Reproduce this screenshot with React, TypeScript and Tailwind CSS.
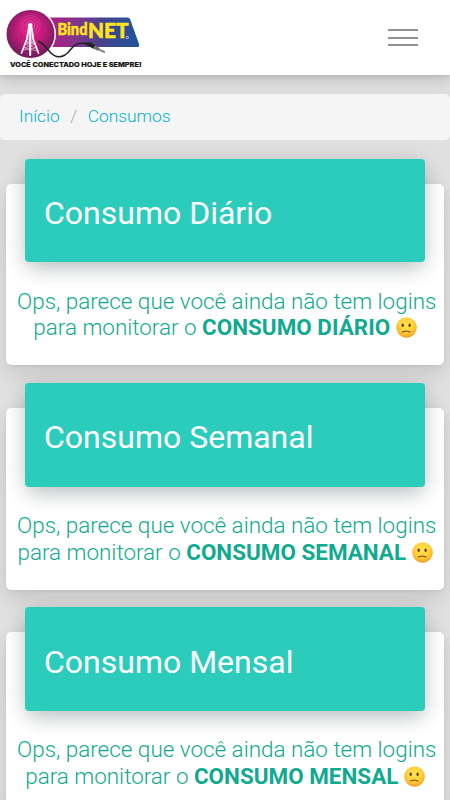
import { useState } from "react";

const consumos = [
  { title: "Consumo Diário", label: "CONSUMO DIÁRIO" },
  { title: "Consumo Semanal", label: "CONSUMO SEMANAL" },
  { title: "Consumo Mensal", label: "CONSUMO MENSAL" },
];

function Logo() {
  return (
    <svg width="144" height="72" viewBox="0 0 144 72" aria-label="BindNET">
      <defs>
        <linearGradient id="banner" x1="0" x2="1" y1="0" y2="0">
          <stop offset="0" stopColor="#b01c80" />
          <stop offset="0.3" stopColor="#84358a" />
          <stop offset="0.62" stopColor="#40458f" />
          <stop offset="1" stopColor="#20549b" />
        </linearGradient>
        <radialGradient id="disc" cx="0.5" cy="0.42" r="0.55">
          <stop offset="0" stopColor="#ec168b" />
          <stop offset="0.5" stopColor="#c31b7c" />
          <stop offset="1" stopColor="#731d5b" />
        </radialGradient>
      </defs>
      <path
        d="M48 17.5H127.500Q129.500 17.5 130.200 19.500L139 44Q139.800 47 137.500 47H50Z"
        fill="url(#banner)"
      />
      <circle cx="30.500" cy="34" r="25.500" fill="#fff" />
      <circle cx="30.500" cy="34" r="24" fill="url(#disc)" />
      <g fill="none" stroke="#fff" strokeWidth="0.4">
        <circle cx="30.200" cy="25.500" r="4.500" opacity="0.6" />
        <circle cx="30.200" cy="25.500" r="7.500" opacity="0.4" />
        <circle cx="30.200" cy="25.500" r="10" opacity="0.3" />
      </g>
      <g fill="none" stroke="#fff" strokeLinecap="round">
        <path d="M29 27L26.500 40L21.500 53M31.500 27L33.500 40L38.500 53" strokeWidth="1.700" />
        <path d="M30.200 25V55" strokeWidth="2" />
        <path
          d="M28 33L33 36L27 39L34 42L25.500 44L36 48L23.500 50M32 33L27.500 36L33.500 39L26.500 42L35 44L24.500 48L37.500 51"
          strokeWidth="0.600"
          opacity="0.8"
        />
      </g>
      <circle cx="30.200" cy="25.300" r="2.300" fill="#fff" />
      <path
        d="M38 41C43 43 45 46 49 51C54 57 60 58 65 55C71 51 71 47 76 44.500C81 42 87 44 91 44"
        fill="none"
        stroke="#252225"
        strokeWidth="1.500"
      />
      <path d="M84 42.500L91 42.500L96 46L94 49L87 45.500Z" fill="#222" />
      <path d="M94 47L99 49.500" stroke="#777" strokeWidth="3.500" />
      <path d="M99 49.500L105 52.500" stroke="#aaa" strokeWidth="2.200" />
      <path d="M97 48.500L104.500 52" stroke="#555" strokeWidth="0.700" />
      <text
        x="57.500"
        y="34.500"
        fill="#ffe51a"
        stroke="#ffe51a"
        strokeWidth="0.500"
        className="font-['Lato',sans-serif] text-[17.500px] font-black"
      >
        <tspan textLength="30" lengthAdjust="spacingAndGlyphs">
          Bind
        </tspan>
        <tspan x="88" y="38" className="text-[21px]" textLength="40.500" lengthAdjust="spacingAndGlyphs">
          NET
        </tspan>
      </text>
      <circle cx="127.300" cy="37.500" r="1.200" fill="none" stroke="#cbd3eb" strokeWidth="0.900" />
      <text
        x="10"
        y="67"
        fill="#111"
        stroke="#111"
        strokeWidth="0.150"
        className="font-['Inter',sans-serif] text-[6.500px] font-extrabold"
        textLength="131.500"
        lengthAdjust="spacingAndGlyphs"
      >
        VOCÊ CONECTADO HOJE E SEMPRE!
      </text>
    </svg>
  );
}

function SadFace() {
  return (
    <svg className="inline-block align-[-3px]" width="21" height="21" viewBox="0 0 21 21">
      <defs>
        <radialGradient id="face" cx="0.48" cy="0.36" r="0.66">
          <stop offset="0" stopColor="#ffe34c" />
          <stop offset="0.55" stopColor="#ffd13b" />
          <stop offset="0.86" stopColor="#f8ae25" />
          <stop offset="1" stopColor="#e68a18" />
        </radialGradient>
      </defs>
      <circle cx="10.500" cy="10.500" r="10.300" fill="url(#face)" />
      <ellipse cx="6.700" cy="8.200" rx="1.100" ry="1.700" fill="#553012" />
      <ellipse cx="13.600" cy="8.200" rx="1.100" ry="1.700" fill="#553012" />
      <path
        d="M6.300 14.900Q10.200 13 14.200 14.900"
        fill="none"
        stroke="#70400f"
        strokeWidth="1"
        strokeLinecap="round"
      />
    </svg>
  );
}

type CardProps = {
  title: string;
  label: string;
};

function ConsumoCard({ title, label }: CardProps) {
  return (
    <section className="h-[181.700px] rounded-[5px] bg-white shadow-[0_8px_20px_rgba(0,0,0,0.12),0_1px_3px_rgba(0,0,0,0.06)]">
      <div className="mx-[19px] -mt-[25px] flex h-[103.900px] items-center rounded-[4px] bg-[#2bccbb] px-[19px] pt-[5px] shadow-[0_8px_20px_-4px_rgba(0,45,40,0.24),0_4px_24px_rgba(0,0,0,0.11)]">
        <h2 className="text-[32px] leading-10 text-white">{title}</h2>
      </div>
      <p className="mr-[10px] ml-[11px] mt-[25.300px] text-center text-[22.450px] leading-[26.500px] font-light whitespace-nowrap text-[#10aa90]">
        Ops, parece que você ainda não tem logins
        <br />
        <span className="-ml-px">
          para monitorar o <b className="font-bold">{label}</b> <SadFace />
        </span>
      </p>
    </section>
  );
}

export default function App() {
  const [open, setOpen] = useState(false);

  return (
    <div className="h-screen overflow-hidden bg-[#e0e0e0] font-['Roboto',sans-serif]">
      <header className="relative flex h-[75px] items-start justify-between bg-white shadow-[0_4px_18px_rgba(0,0,0,0.16),0_1px_5px_rgba(0,0,0,0.12)]">
        <Logo />
        <button
          aria-label="Menu"
          aria-expanded={open}
          onClick={() => setOpen(!open)}
          className="mt-[29px] mr-[32px] flex w-[30px] flex-col gap-[5.500px]"
        >
          <span className="h-[2px] w-full bg-[#929292]"></span>
          <span className="h-[2px] w-full bg-[#929292]"></span>
          <span className="h-[2px] w-full bg-[#929292]"></span>
        </button>
      </header>

      <nav className="mt-[19px] flex h-[46px] items-center rounded-[5px] bg-[#f5f5f5] pb-px pl-[19px] text-[17.400px] font-light text-[#00b1cc]">
        <a href="#">Início</a>
        <span className="mx-[10.500px] text-[#aaa]">/</span>
        <a href="#">Consumos</a>
      </nav>

      <main className="mt-[43.500px] flex flex-col gap-[42.700px] px-[6px]">
        {consumos.map((c) => (
          <ConsumoCard key={c.label} title={c.title} label={c.label} />
        ))}
      </main>
    </div>
  );
}
